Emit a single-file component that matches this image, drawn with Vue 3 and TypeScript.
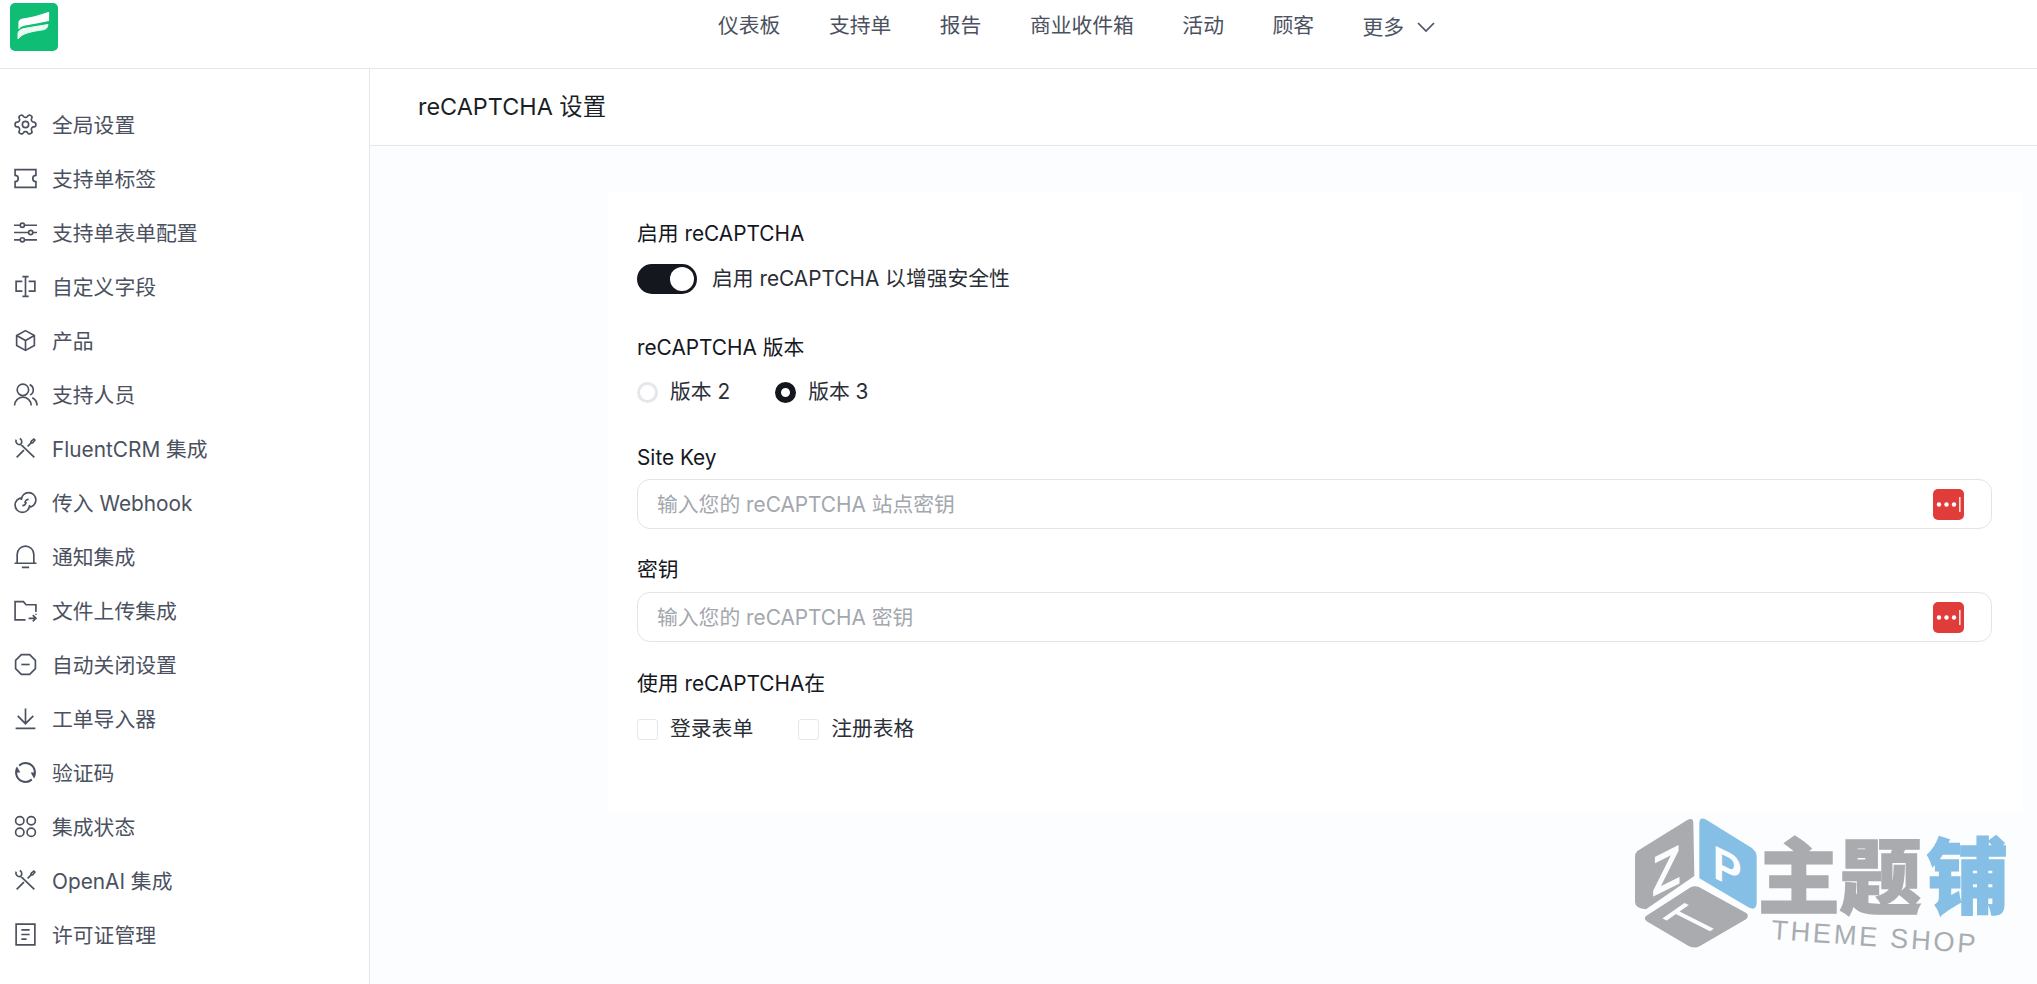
<script setup lang="ts">
import { ref } from 'vue'

const nav = ['仪表板', '支持单', '报告', '商业收件箱', '活动', '顾客']

const tools = '<path d="M7.5 8L20.5 20.5M3 3.5a3.5 3.5 0 0 0 4.5 4.5M7.5 8A3.5 3.5 0 0 0 6.5 2.5M10.5 13.5l-7 7M14 10l3-3 .5-2L20 3l1 1-2 2.500-2 .5"/>'

const menu = [
  { name: '全局设置', icon: '<path transform="rotate(90 12 12)" d="M12.220 2h-.44a2 2 0 0 0-2 2v.18a2 2 0 0 1-1 1.730l-.43.25a2 2 0 0 1-2 0l-.15-.08a2 2 0 0 0-2.730.73l-.22.38a2 2 0 0 0 .73 2.730l.15.1a2 2 0 0 1 1 1.720v.51a2 2 0 0 1-1 1.740l-.15.09a2 2 0 0 0-.73 2.730l.22.38a2 2 0 0 0 2.730.73l.15-.08a2 2 0 0 1 2 0l.43.25a2 2 0 0 1 1 1.730V20a2 2 0 0 0 2 2h.44a2 2 0 0 0 2-2v-.18a2 2 0 0 1 1-1.730l.43-.25a2 2 0 0 1 2 0l.15.08a2 2 0 0 0 2.730-.73l.22-.39a2 2 0 0 0-.73-2.730l-.15-.08a2 2 0 0 1-1-1.740v-.5a2 2 0 0 1 1-1.740l.15-.09a2 2 0 0 0 .73-2.730l-.22-.38a2 2 0 0 0-2.730-.73l-.15.08a2 2 0 0 1-2 0l-.43-.25a2 2 0 0 1-1-1.730V4a2 2 0 0 0-2-2z"/><circle cx="12" cy="12" r="3"/>' },
  { name: '支持单标签', icon: '<path d="M2 3.500h20V9a3 3 0 0 0 0 6v5.500H2V15a3 3 0 0 0 0-6z"/>' },
  { name: '支持单表单配置', icon: '<path d="M1 5h6M11 5h12M1 12h14M19 12h4M1 19h6M11 19h12"/><circle cx="9" cy="5" r="2"/><circle cx="17" cy="12" r="2"/><circle cx="9" cy="19" r="2"/>' },
  { name: '自定义字段', icon: '<path d="M12 2.500v19M9 2.500h6M9 21.500h6M9 7H3v9.500h6M15 7h6v9.500h-6"/>' },
  { name: '产品', icon: '<path d="M12 2.500l8.500 4.800v9.400L12 21.500l-8.500-4.800V7.300zM3.500 7.300L12 12l8.500-4.700M12 12v9.500"/>' },
  { name: '支持人员', icon: '<circle cx="9.500" cy="7.500" r="5.500"/><path d="M1.500 22.500a8 8 0 0 1 16 0M16 2.500a5.500 5.500 0 0 1 .5 10M18.500 15.200a8 8 0 0 1 4.500 7.300"/>' },
  { name: 'FluentCRM 集成', icon: tools },
  { name: '传入 Webhook', icon: '<path d="M15 16.500A7 7 0 1 0 8 9.500M9 7.500A7 7 0 1 0 16 14.500M11.500 12.500A3.500 3.500 0 0 1 15 9M12.500 11.500A3.500 3.500 0 0 1 9 15"/>' },
  { name: '通知集成', icon: '<path d="M4 18.500V10a8 8 0 0 1 16 0v8.500M1.500 18.500h21M8.500 22.500h7"/>' },
  { name: '文件上传集成', icon: '<path d="M12 21H2V3.500h8l2.500 3H22v7"/><path d="M22 16v-1M15 19.500h7M19 16.500l3 3-3 3"/>' },
  { name: '自动关闭设置', icon: '<path d="M8 2.500h8l5.500 5.500v8L16 21.500H8L2.500 16V8z"/><path d="M8 12h8"/>' },
  { name: '工单导入器', icon: '<path d="M12 2.500v14M4.500 9.500l7.500 7.500 7.500-7.500M2.500 21.500h19"/>' },
  { name: '验证码', icon: '<path fill="#4b5160" stroke="none" d="M5.463 4.433A9.961 9.961 0 0 1 12 2c5.523 0 10 4.477 10 10 0 2.136-.67 4.116-1.810 5.740L17 12h3A8 8 0 0 0 6.460 6.228l-.997-1.795zm13.074 15.134A9.961 9.961 0 0 1 12 22C6.477 22 2 17.523 2 12c0-2.136.67-4.116 1.810-5.740L7 12H4a8 8 0 0 0 13.540 5.772l.997 1.795z"/>' },
  { name: '集成状态', icon: '<circle cx="6.500" cy="6.500" r="4"/><circle cx="17.500" cy="6.500" r="4"/><circle cx="6.500" cy="17.500" r="4"/><circle cx="17.500" cy="17.500" r="4"/>' },
  { name: 'OpenAI 集成', icon: tools },
  { name: '许可证管理', icon: '<path d="M3 2h18v20H3zM8 7.500h8M8 12h8M8 16.500h5"/>' },
]

const enabled = ref(true)
const version = ref('3')
const siteKey = ref('')
const secret = ref('')
const onLogin = ref(false)
const onRegister = ref(false)
</script>

<template>
  <div class="page">
    <header class="topbar">
      <svg class="logo" viewBox="0 0 48 48">
        <rect width="48" height="48" rx="5" fill="#0fbd74" />
        <path d="M9 20C9 17.500 10 16.500 13 16 21 15 30 12.500 38.500 9.500L38.500 17.500C30 19.500 20 20.500 13 22.500 10 23.500 9 24.500 9 25.500z" fill="#fff" stroke="#fff" stroke-width="1.2" stroke-linejoin="round" />
        <path d="M8 31C8 28 10 26.500 14 25.500 22 24 30 23 38 21.500 37.500 25 36 26.500 32 27 22 28.500 12 30 8 36z" fill="#eafaf3" stroke="#eafaf3" stroke-width="1" stroke-linejoin="round" />
      </svg>
      <nav class="nav">
        <a v-for="item in nav" :key="item">{{ item }}</a>
        <a class="more">更多
          <svg width="20" height="12" viewBox="0 0 20 12"><path d="M2 1l8 8 8-8" fill="none" stroke="#4b5563" stroke-width="1.7" /></svg>
        </a>
      </nav>
    </header>

    <div class="layout">
      <aside class="sidebar">
        <a v-for="item in menu" :key="item.name" class="menu-item">
          <svg class="menu-icon" viewBox="0 0 24 24" v-html="item.icon"></svg>
          <span>{{ item.name }}</span>
        </a>
      </aside>

      <main class="main">
        <div class="main-head">reCAPTCHA 设置</div>
        <section class="card">
          <div class="label">启用 reCAPTCHA</div>
          <label class="switch-row">
            <input v-model="enabled" class="switch" type="checkbox" />
            <span class="text">启用 reCAPTCHA 以增强安全性</span>
          </label>

          <div class="label label-gap">reCAPTCHA 版本</div>
          <div class="options">
            <label class="option"><input v-model="version" class="radio" type="radio" value="2" /><span class="text">版本 2</span></label>
            <label class="option"><input v-model="version" class="radio" type="radio" value="3" /><span class="text">版本 3</span></label>
          </div>

          <div class="label label-key">Site Key</div>
          <div class="input-wrap key-wrap">
            <input v-model="siteKey" type="text" placeholder="输入您的 reCAPTCHA 站点密钥" />
            <svg class="pass-icon" viewBox="0 0 31 31">
              <rect width="31" height="31" rx="5" fill="#e03c3a" />
              <circle cx="6" cy="15.5" r="2.2" fill="#fff" />
              <circle cx="13.5" cy="15.5" r="2.2" fill="#fff" />
              <circle cx="21" cy="15.5" r="2.2" fill="#fff" />
              <rect x="26" y="8" width="1.6" height="15" fill="#fbdcd6" />
            </svg>
          </div>

          <div class="label label-secret">密钥</div>
          <div class="input-wrap">
            <input v-model="secret" type="text" placeholder="输入您的 reCAPTCHA 密钥" />
            <svg class="pass-icon" viewBox="0 0 31 31">
              <rect width="31" height="31" rx="5" fill="#e03c3a" />
              <circle cx="6" cy="15.5" r="2.2" fill="#fff" />
              <circle cx="13.5" cy="15.5" r="2.2" fill="#fff" />
              <circle cx="21" cy="15.5" r="2.2" fill="#fff" />
              <rect x="26" y="8" width="1.6" height="15" fill="#fbdcd6" />
            </svg>
          </div>

          <div class="label label-use">使用 reCAPTCHA在</div>
          <div class="options checks">
            <label class="option"><input v-model="onLogin" class="check" type="checkbox" /><span class="text">登录表单</span></label>
            <label class="option"><input v-model="onRegister" class="check" type="checkbox" /><span class="text">注册表格</span></label>
          </div>
        </section>
      </main>
    </div>

    <!-- 水印 -->
    <svg class="watermark" viewBox="0 0 1311 582">
      <path d="M112 183L262 90Q280 80 280 100L283 258 138 358Q105 355 105 335V200Q105 190 112 183z" fill="#a9abae" />
      <path d="M298 100Q298 78 320 90L452 172Q470 184 470 200V340Q468 364 445 352L298 265z" fill="#86bfe5" />
      <path d="M138 378L272 292Q285 285 298 292L440 370Q448 380 438 388L300 468Q282 478 262 466L140 394Q130 385 138 378z" fill="#a9abae" />
      <text class="wm-letter" transform="matrix(1.1 -.55 0 1.3 155 322)">Z</text>
      <text class="wm-letter" transform="matrix(1 .5 0 1.1 338 262)">P</text>
      <text class="wm-letter wm-t" transform="matrix(.9 -.63 1.29 .645 300 445)">T</text>
      <text x="474" y="352" class="wm-title" fill="#a9abae" stroke="#a9abae">主题</text>
      <text x="980" y="352" class="wm-title" fill="#86bfe5" stroke="#86bfe5">铺</text>
      <text x="512" y="447" class="wm-sub" transform="rotate(4 512 447)">THEME SHOP</text>
    </svg>
  </div>
</template>

<style scoped>
* {
  box-sizing: border-box;
}
.page {
  position: relative;
  width: 2037px;
  height: 984px;
  overflow: hidden;
  background: #fff;
  font-family: Inter, "Noto Sans CJK SC", sans-serif;
  font-size: 20.8px;
  color: #4b5160;
}
.topbar {
  display: flex;
  height: 69px;
  padding: 3px 0 0 10px;
  border-bottom: 1px solid #e5e7eb;
}
.logo {
  width: 48px;
  height: 48px;
  flex: none;
}
.nav {
  display: flex;
  gap: 48.5px;
  margin-left: 660px;
  padding-top: 8px;
  line-height: 30px;
  height: 40px;
}
.more {
  display: flex;
  align-items: center;
  gap: 12px;
  height: 30px;
  margin-top: 2px;
  color: #4b5563;
}
.layout {
  display: flex;
  height: 915px;
}
.sidebar {
  width: 370px;
  flex: none;
  padding-top: 27.5px;
  border-right: 1px solid #e5e7eb;
}
.menu-item {
  display: flex;
  align-items: center;
  gap: 14px;
  height: 54px;
  padding-left: 13px;
}
.menu-icon {
  width: 25px;
  height: 25px;
  margin-top: 2px;
  flex: none;
  fill: none;
  stroke: #4b5160;
  stroke-width: 1.6;
}
.main {
  flex: 1;
  background: #fcfdfe;
}
.main-head {
  height: 77px;
  padding-left: 48px;
  line-height: 76px;
  background: #fff;
  border-bottom: 1px solid #e5e7eb;
  color: #1b1f26;
  font-size: 23.4px;
}
.card {
  margin: 46px 14px 0 238px;
  padding: 29px 31px 71px 29px;
  background: #fff;
  color: #14171d;
}
.label {
  line-height: 26px;
  height: 26px;
}
.label-gap {
  margin-top: 41px;
}
.label-key {
  margin-top: 40px;
}
.label-secret {
  margin-top: 28px;
}
.label-use {
  margin-top: 29px;
}
.switch-row {
  display: flex;
  align-items: center;
  gap: 15px;
  margin-top: 17px;
  height: 30px;
  color: #2a2e36;
}
.text {
  margin-bottom: 4px;
}
.switch {
  appearance: none;
  position: relative;
  width: 60px;
  height: 30px;
  margin: 0;
  border-radius: 15px;
  background: #e5e7eb;
}
.switch:checked {
  background: #14171d;
}
.switch::after {
  content: "";
  position: absolute;
  top: 3px;
  left: 3px;
  width: 24px;
  height: 24px;
  border-radius: 50%;
  background: #fff;
}
.switch:checked::after {
  left: 33px;
}
.options {
  display: flex;
  gap: 45px;
  margin-top: 18px;
  height: 26px;
}
.checks {
  margin-top: 19px;
}
.option {
  display: flex;
  align-items: center;
  gap: 12px;
  color: #2a2e36;
}
.radio {
  appearance: none;
  width: 21px;
  height: 21px;
  margin: 0;
  border: 3px solid #e5e7eb;
  border-radius: 50%;
  background: #fff;
}
.radio:checked {
  border: 6.5px solid #14171d;
}
.check {
  appearance: none;
  width: 21px;
  height: 21px;
  margin: 0;
  border: 1px solid #e5e7eb;
  border-radius: 3px;
  background: #fff;
}
.input-wrap {
  position: relative;
  margin-top: 9px;
}
.key-wrap {
  margin-top: 8px;
}
.input-wrap input {
  display: block;
  width: 100%;
  height: 50px;
  padding: 0 60px 0 19px;
  border: 1px solid #e2e4e9;
  border-radius: 13px;
  background: #fff;
  outline: none;
  font: inherit;
}
.input-wrap input::placeholder {
  color: #a3a7ae;
}
.pass-icon {
  position: absolute;
  top: 10px;
  right: 28px;
  width: 31px;
  height: 31px;
}
.watermark {
  position: absolute;
  left: 1600px;
  top: 790px;
  width: 437px;
  height: 194px;
}
.wm-letter {
  font: 700 130px "Liberation Sans", sans-serif;
  fill: #fbfcfe;
}
.wm-t {
  font-weight: 400;
}
.wm-title {
  font: 900 245px "Noto Sans CJK SC", sans-serif;
  stroke-width: 5px;
}
.wm-sub {
  font: 400 82px "Liberation Sans", sans-serif;
  fill: #a9adb2;
  letter-spacing: 8px;
}
</style>

<style>
body {
  margin: 0;
}
</style>
